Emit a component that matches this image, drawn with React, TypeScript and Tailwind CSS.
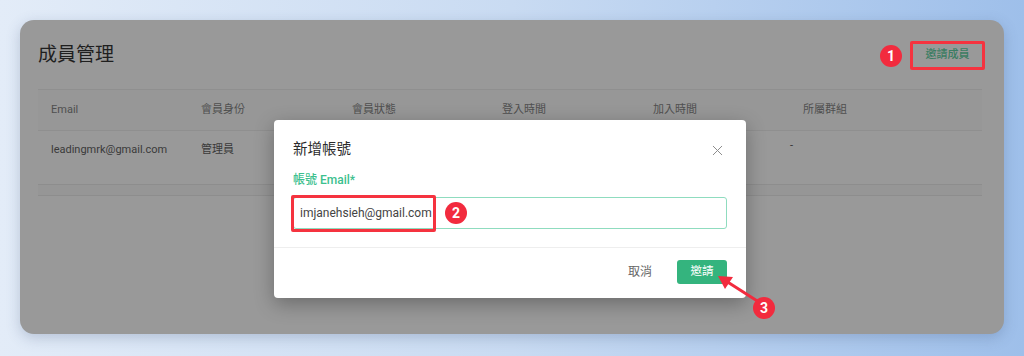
import React from 'react';
import { X } from 'lucide-react';

const font = { fontFamily: 'Roboto, "Noto Sans CJK TC", sans-serif' };

const columns = ['Email', '會員身份', '會員狀態', '登入時間', '加入時間', '所屬群組'];

function Badge({ n }: { n: number }) {
  return (
    <span className="w-[22px] h-[22px] rounded-full bg-[#f22b3e] text-white text-[14px] font-bold flex items-center justify-center leading-none">
      {n}
    </span>
  );
}

export default function App() {
  return (
    <div
      style={font}
      className="relative w-[1024px] h-[356px] overflow-hidden bg-gradient-to-r from-[#e3ecf8] via-[#c9dbf2] to-[#9ebfea] p-[20px]"
    >
      {/* Dimmed page card */}
      <div className="relative w-[984px] h-[314px] rounded-[14px] bg-[#999999] shadow-[0_4px_14px_rgba(60,80,120,0.25)] pl-[18px] pr-[22px] pt-[21px]">
        <div className="flex items-center justify-between h-[29px]">
          <h1 className="text-[19px] font-normal text-[#1f1f1f]">成員管理</h1>
          <div className="flex items-center gap-[8px] mr-[-3px]">
            <Badge n={1} />
            <div className="w-[75px] h-[29px] border-[3px] border-[#f5333f] rounded-[2px] flex items-center justify-center text-[11px] font-medium text-[#3b7d62]">
              邀請成員
            </div>
          </div>
        </div>

        {/* Table */}
        <div className="mt-[19px] text-[11px]">
          <div className="grid grid-cols-[150px_151px_150px_151px_150px_1fr] h-[42px] items-center pl-[13px] bg-[#979797] border-t border-b border-[#8f8f8f] text-[#4f4f4f]">
            {columns.map((c) => (
              <span key={c}>{c}</span>
            ))}
          </div>
          <div className="grid grid-cols-[150px_151px_150px_151px_150px_1fr] h-[53px] pl-[13px] pt-[11px] text-[#3a3a3a]">
            <span>leadingmrk@gmail.com</span>
            <span>管理員</span>
            <span></span>
            <span></span>
            <span className="text-right pr-[10px] leading-[8px] text-[#333]">-</span>
            <span></span>
          </div>
          <div className="h-[12px] bg-[#969696] border-t border-b border-[#8d8d8d]" />
        </div>

        {/* Modal */}
        <div className="absolute left-[254px] top-[100px] w-[472px] h-[178px] bg-white rounded-[4px] shadow-[0_6px_20px_rgba(0,0,0,0.3)] flex flex-col">
          <div className="px-[19px] pt-[19px] flex items-center justify-between">
            <h2 className="text-[14.5px] text-[#2b2b2b] leading-[22px]">新增帳號</h2>
            <X className="w-[17px] h-[17px] text-[#8c8c8c] mr-[1px]" strokeWidth={1.4} />
          </div>
          <div className="px-[19px] pt-[10px]">
            <div className="text-[12px] font-medium text-[#3cc08e] leading-[18px]">帳號 Email*</div>
            <div className="relative mt-[8px] h-[32px] border border-[#8fdcbf] rounded-[3px] flex items-center pl-[6px] text-[12px] text-[#444444]">
              imjanehsieh@gmail.com
              <span className="w-px h-[15px] bg-[#333] ml-px" />
              {/* annotation box */}
              <div className="absolute left-[-3px] top-[-3px] w-[145px] h-[37px] border-[3px] border-[#f5333f] rounded-[2px]" />
              <div className="absolute left-[151px] top-[4px]">
                <Badge n={2} />
              </div>
            </div>
          </div>
          <div className="mt-[18px] border-t border-[#eeeeee] flex-1 flex items-center justify-end gap-[25px] px-[19px] pb-[2px]">
            <span className="text-[12px] text-[#666666]">取消</span>
            <button className="w-[50px] h-[24px] rounded-[3px] bg-[#34b47e] text-white text-[11.5px]">邀請</button>
          </div>
        </div>
      </div>

      {/* Step 3 arrow + badge */}
      <svg className="absolute left-[700px] top-[260px]" width="80" height="60" viewBox="700 260 80 60">
        <line x1="762" y1="304" x2="726" y2="281" stroke="#f22b3e" strokeWidth="3" strokeLinecap="round" />
        <polygon points="718,276 733,277 725,289" fill="#f22b3e" />
      </svg>
      <div className="absolute left-[753px] top-[297px]">
        <Badge n={3} />
      </div>
    </div>
  );
}
